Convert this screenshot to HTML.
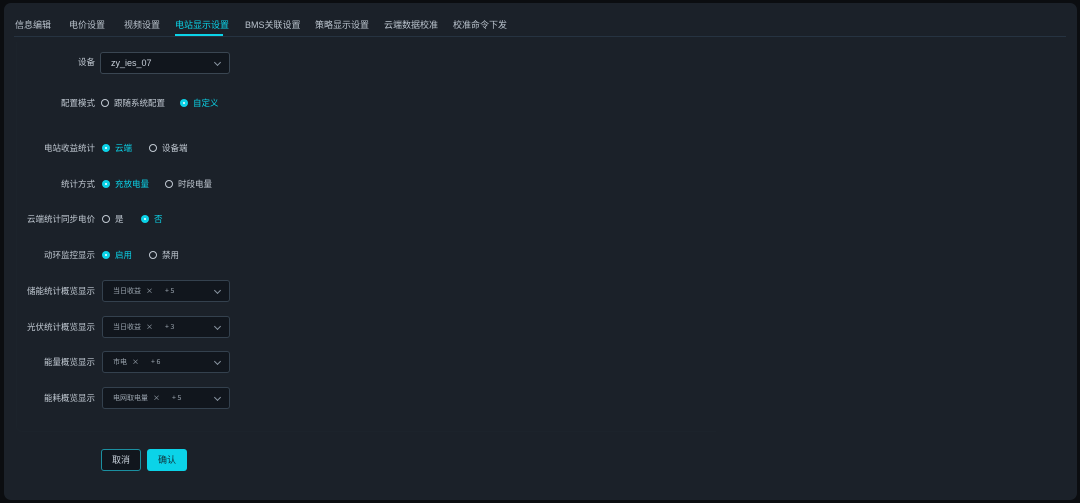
<!DOCTYPE html>
<html><head><meta charset="utf-8"><style>
*{margin:0;padding:0;box-sizing:border-box}
body{width:1080px;height:503px;background:#0b0d10;font-family:"Liberation Sans","Noto Sans CJK SC",sans-serif;font-size:9px;line-height:1;color:#c8d0da;position:relative;overflow:hidden}
.panel{position:absolute;left:4px;top:3px;width:1073px;height:497px;background:#1b2129;border-radius:7px}
.inner{position:absolute;left:16px;top:42px;width:700px;height:390px;border:1px solid #1c232b;border-top:none;border-right:none;border-radius:0 0 0 6px}
.a{position:absolute;white-space:nowrap}
.tab{position:absolute;top:21px;font-size:9px;color:#b9c2cc;white-space:nowrap}
.line{position:absolute;left:14px;top:36px;width:1052px;height:1px;background:#263341}
.lbl{position:absolute;right:985px;font-size:8.5px;color:#c1c9d2;white-space:nowrap}
.sel{position:absolute;left:102px;width:128px;height:22px;background:#11161d;border:1px solid #34414e;border-radius:3px}
.chev{position:absolute;right:9px;top:7px;width:5px;height:5px;border-right:1px solid #8a96a2;border-bottom:1px solid #8a96a2;transform:rotate(45deg)}
.r{position:absolute;width:8px;height:8px;border-radius:50%;border:1px solid #c1c9d2}
.r.on{border:none;background:#0bd3e8}
.r.on::after{content:"";position:absolute;left:3px;top:3px;width:2px;height:2px;background:#fff;border-radius:50%}
.t{position:absolute;font-size:8.5px;color:#c1c9d2;white-space:nowrap}
.t.on{color:#0bd3e8}
.tag{position:absolute;top:7px;font-size:7px;color:#9aa4ae;white-space:nowrap;font-family:"Noto Sans CJK SC",sans-serif;line-height:1}
</style></head><body>
<div class="panel"></div>
<div class="inner"></div>
<div class="tab" style="left:15px">信息编辑</div>
<div class="tab" style="left:69px">电价设置</div>
<div class="tab" style="left:124px">视频设置</div>
<div class="tab" style="left:175px;color:#0bd3e8">电站显示设置</div>
<div class="a" style="left:175px;top:34px;width:48px;height:2px;background:#0bd3e8"></div>
<div class="tab" style="left:245px">BMS关联设置</div>
<div class="tab" style="left:315px">策略显示设置</div>
<div class="tab" style="left:384px">云端数据校准</div>
<div class="tab" style="left:453px">校准命令下发</div>
<div class="line"></div>

<div class="lbl" style="top:58px">设备</div>
<div class="sel" style="left:100px;top:52px;width:130px;height:22px;border-color:#3a4652"><span class="a" style="left:10px;top:6px;color:#c8d0da">zy_ies_07</span><div class="chev"></div></div>

<div class="lbl" style="top:99px">配置模式</div>
<div class="r" style="left:101px;top:99px"></div><div class="t" style="left:114px;top:99px">跟随系统配置</div>
<div class="r on" style="left:180px;top:99px"></div><div class="t on" style="left:193px;top:99px">自定义</div>

<div class="lbl" style="top:144px">电站收益统计</div>
<div class="r on" style="left:102px;top:144px"></div><div class="t on" style="left:115px;top:144px">云端</div>
<div class="r" style="left:149px;top:144px"></div><div class="t" style="left:162px;top:144px">设备端</div>

<div class="lbl" style="top:180px">统计方式</div>
<div class="r on" style="left:102px;top:180px"></div><div class="t on" style="left:115px;top:180px">充放电量</div>
<div class="r" style="left:165px;top:180px"></div><div class="t" style="left:178px;top:180px">时段电量</div>

<div class="lbl" style="top:215px">云端统计同步电价</div>
<div class="r" style="left:102px;top:215px"></div><div class="t" style="left:115px;top:215px">是</div>
<div class="r on" style="left:141px;top:215px"></div><div class="t on" style="left:154px;top:215px">否</div>

<div class="lbl" style="top:251px">动环监控显示</div>
<div class="r on" style="left:102px;top:251px"></div><div class="t on" style="left:115px;top:251px">启用</div>
<div class="r" style="left:149px;top:251px"></div><div class="t" style="left:162px;top:251px">禁用</div>

<div class="lbl" style="top:287px">储能统计概览显示</div>
<div class="sel" style="top:280px"><span class="tag" style="left:10px">当日收益</span><span class="tag" style="left:43px">×</span><span class="tag" style="left:62px">+ 5</span><div class="chev"></div></div>
<div class="lbl" style="top:323px">光伏统计概览显示</div>
<div class="sel" style="top:316px"><span class="tag" style="left:10px">当日收益</span><span class="tag" style="left:43px">×</span><span class="tag" style="left:62px">+ 3</span><div class="chev"></div></div>
<div class="lbl" style="top:358px">能量概览显示</div>
<div class="sel" style="top:351px"><span class="tag" style="left:10px">市电</span><span class="tag" style="left:29px">×</span><span class="tag" style="left:48px">+ 6</span><div class="chev"></div></div>
<div class="lbl" style="top:394px">能耗概览显示</div>
<div class="sel" style="top:387px"><span class="tag" style="left:10px">电网取电量</span><span class="tag" style="left:50px">×</span><span class="tag" style="left:69px">+ 5</span><div class="chev"></div></div>

<div class="a" style="left:101px;top:449px;width:40px;height:22px;border:1px solid #1b8fa0;border-radius:3px;background:#11161d;color:#c8d0da;text-align:center;line-height:20px">取消</div>
<div class="a" style="left:147px;top:449px;width:40px;height:22px;border-radius:3px;background:#0bd3e8;color:#10313a;text-align:center;line-height:22px">确认</div>
</body></html>
